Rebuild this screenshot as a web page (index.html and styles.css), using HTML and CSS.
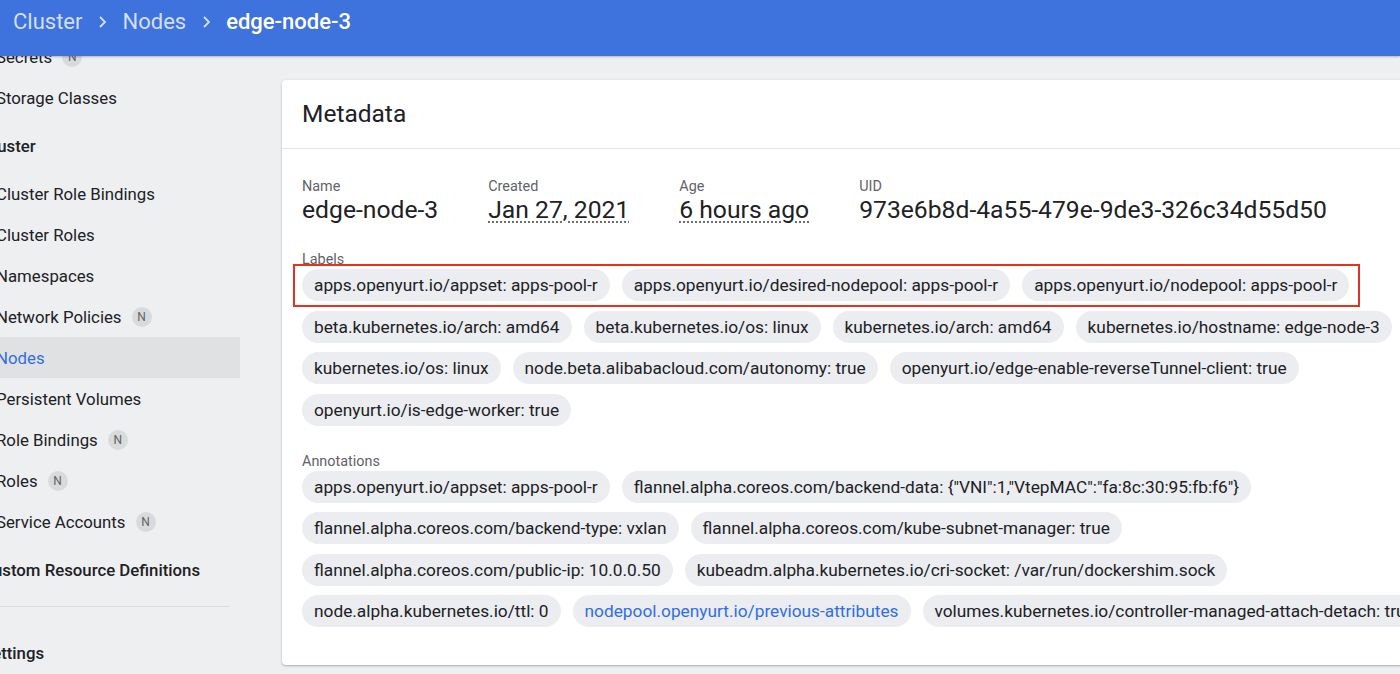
FILE: index.html
```html
<!DOCTYPE html>
<html lang="en">
<head>
<meta charset="utf-8">
<title>edge-node-3 - Nodes</title>
<link rel="stylesheet" href="styles.css">
</head>
<body>
<header class="topbar">
  <nav class="crumbs">
    <span class="crumb">Cluster</span>
    <svg class="chev" viewBox="0 0 24 24" width="24" height="24"><polyline points="10,7 15,12 10,17" fill="none" stroke="currentColor" stroke-width="1.8"/></svg>
    <span class="crumb">Nodes</span>
    <svg class="chev" viewBox="0 0 24 24" width="24" height="24"><polyline points="10,7 15,12 10,17" fill="none" stroke="currentColor" stroke-width="1.8"/></svg>
    <span class="crumb current">edge-node-3</span>
  </nav>
</header>
<div class="layout">
  <aside class="sidebar">
    <ul class="nav">
      <li class="item"><span class="txt">Secrets</span><span class="badge">N</span></li>
      <li class="item"><span class="txt">Storage Classes</span></li>
      <li class="heading"><span class="txt">Cluster</span></li>
      <li class="item"><span class="txt">Cluster Role Bindings</span></li>
      <li class="item"><span class="txt">Cluster Roles</span></li>
      <li class="item"><span class="txt">Namespaces</span></li>
      <li class="item"><span class="txt">Network Policies</span><span class="badge">N</span></li>
      <li class="item selected"><span class="txt">Nodes</span></li>
      <li class="item"><span class="txt">Persistent Volumes</span></li>
      <li class="item"><span class="txt">Role Bindings</span><span class="badge">N</span></li>
      <li class="item"><span class="txt">Roles</span><span class="badge">N</span></li>
      <li class="item"><span class="txt">Service Accounts</span><span class="badge">N</span></li>
      <li class="heading"><span class="txt">Custom Resource Definitions</span></li>
      <li class="divider"></li>
      <li class="heading"><span class="txt">Settings</span></li>
    </ul>
  </aside>
  <main class="content">
    <section class="card">
      <div class="card-head">Metadata</div>
      <div class="card-body">
        <div class="meta-row">
          <div class="meta">
            <div class="meta-label">Name</div>
            <div class="meta-value">edge-node-3</div>
          </div>
          <div class="meta">
            <div class="meta-label">Created</div>
            <div class="meta-value"><span class="dotted">Jan 27, 2021</span></div>
          </div>
          <div class="meta">
            <div class="meta-label">Age</div>
            <div class="meta-value"><span class="dotted">6 hours ago</span></div>
          </div>
          <div class="meta">
            <div class="meta-label">UID</div>
            <div class="meta-value">973e6b8d-4a55-479e-9de3-326c34d55d50</div>
          </div>
        </div>
        <div class="section">
          <div class="meta-label">Labels</div>
          <div class="chips">
            <div class="highlight"></div>
            <span class="chip">apps.openyurt.io/appset: apps-pool-r</span>
            <span class="chip">apps.openyurt.io/desired-nodepool: apps-pool-r</span>
            <span class="chip">apps.openyurt.io/nodepool: apps-pool-r</span>
            <span class="chip">beta.kubernetes.io/arch: amd64</span>
            <span class="chip">beta.kubernetes.io/os: linux</span>
            <span class="chip">kubernetes.io/arch: amd64</span>
            <span class="chip">kubernetes.io/hostname: edge-node-3</span>
            <span class="chip">kubernetes.io/os: linux</span>
            <span class="chip">node.beta.alibabacloud.com/autonomy: true</span>
            <span class="chip">openyurt.io/edge-enable-reverseTunnel-client: true</span>
            <span class="chip">openyurt.io/is-edge-worker: true</span>
          </div>
        </div>
        <div class="section annotations">
          <div class="meta-label">Annotations</div>
          <div class="chips">
            <span class="chip">apps.openyurt.io/appset: apps-pool-r</span>
            <span class="chip">flannel.alpha.coreos.com/backend-data: {"VNI":1,"VtepMAC":"fa:8c:30:95:fb:f6"}</span>
            <span class="chip">flannel.alpha.coreos.com/backend-type: vxlan</span>
            <span class="chip">flannel.alpha.coreos.com/kube-subnet-manager: true</span>
            <span class="chip">flannel.alpha.coreos.com/public-ip: 10.0.0.50</span>
            <span class="chip">kubeadm.alpha.kubernetes.io/cri-socket: /var/run/dockershim.sock</span>
            <span class="chip">node.alpha.kubernetes.io/ttl: 0</span>
            <span class="chip link">nodepool.openyurt.io/previous-attributes</span>
            <span class="chip">volumes.kubernetes.io/controller-managed-attach-detach: true</span>
          </div>
        </div>
      </div>
    </section>
  </main>
</div>
</body>
</html>
```

FILE: styles.css
```css
html, body {
  margin: 0;
  padding: 0;
  overflow: hidden;
  width: 1400px;
  height: 674px;
}

body {
  background: #eeeff1;
  font-family: Roboto, "Noto Sans", "Liberation Sans", sans-serif;
  color: #202124;
}

.topbar {
  position: relative;
  z-index: 2;
  height: 56px;
  box-sizing: border-box;
  background: #3e72dc;
  padding: 11px 0 0 13px;
  box-shadow: 0 1px 2px rgba(0, 0, 0, 0.25);
}

.crumbs {
  display: flex;
  align-items: center;
  gap: 8px;
  height: 22px;
  font-size: 22px;
  line-height: 22px;
  color: rgba(255, 255, 255, 0.78);
}

.chev {
  flex: none;
  color: rgba(255, 255, 255, 0.78);
}

.crumb.current {
  color: #ffffff;
  font-weight: 500;
}

.layout {
  display: flex;
  height: 618px;
}

.sidebar {
  flex: none;
  width: 240px;
  height: 618px;
  overflow: hidden;
}

.nav {
  list-style: none;
  margin: -20px 0 0 0;
  padding: 0;
  font-size: 16.8px;
}

.item {
  display: flex;
  align-items: center;
  height: 41px;
  white-space: nowrap;
}

.item .txt {
  margin-left: -4px;
}

.item.selected {
  background: #e0e1e3;
  color: #326de6;
}

.heading {
  display: flex;
  align-items: center;
  height: 55px;
  font-weight: 500;
  white-space: nowrap;
}

.heading .txt {
  margin-left: -18px;
}

.divider {
  height: 1px;
  background: #dadce0;
  margin: 9px 11px 18px 0;
}

.badge {
  display: inline-flex;
  align-items: center;
  justify-content: center;
  width: 20px;
  height: 20px;
  margin-left: 10px;
  border-radius: 50%;
  background: #d9dadc;
  color: #5f6368;
  font-size: 12px;
}

.content {
  flex: none;
  padding: 24px 0 0 42px;
}

.card {
  width: 1180px;
  background: #ffffff;
  border-radius: 4px;
  box-shadow: 0 1px 3px rgba(0, 0, 0, 0.2), 0 1px 1px rgba(0, 0, 0, 0.1);
}

.card-head {
  padding: 20px;
  font-size: 24.5px;
  line-height: 28px;
  border-bottom: 1px solid #e3e4e6;
}

.card-body {
  padding: 26px 20px 38px 20px;
}

.meta-row {
  display: flex;
  gap: 50px;
}

.meta-label {
  font-size: 14.4px;
  line-height: 17px;
  padding-top: 3px;
  color: #5f6368;
}

.meta-value {
  font-size: 24.7px;
  line-height: 30px;
  white-space: nowrap;
}

.dotted {
  text-decoration-line: underline;
  text-decoration-style: dotted;
  text-decoration-thickness: 2px;
  text-underline-offset: 3px;
  text-decoration-color: #6b6f74;
}

.section {
  margin-top: 23px;
}

.section.annotations {
  margin-top: 24px;
}

.chips {
  position: relative;
  display: flex;
  flex-wrap: wrap;
  column-gap: 12px;
  row-gap: 9.5px;
  margin-top: 1px;
}

.chip {
  display: inline-flex;
  align-items: center;
  height: 32px;
  padding: 0 12px;
  border-radius: 16px;
  background: #ebedf0;
  font-size: 17.3px;
  white-space: nowrap;
}

.chip.link {
  color: #326de6;
}

.highlight {
  position: absolute;
  left: -9px;
  top: -5px;
  width: 1063px;
  height: 39px;
  border: 2px solid #e5321f;
  pointer-events: none;
}
```
